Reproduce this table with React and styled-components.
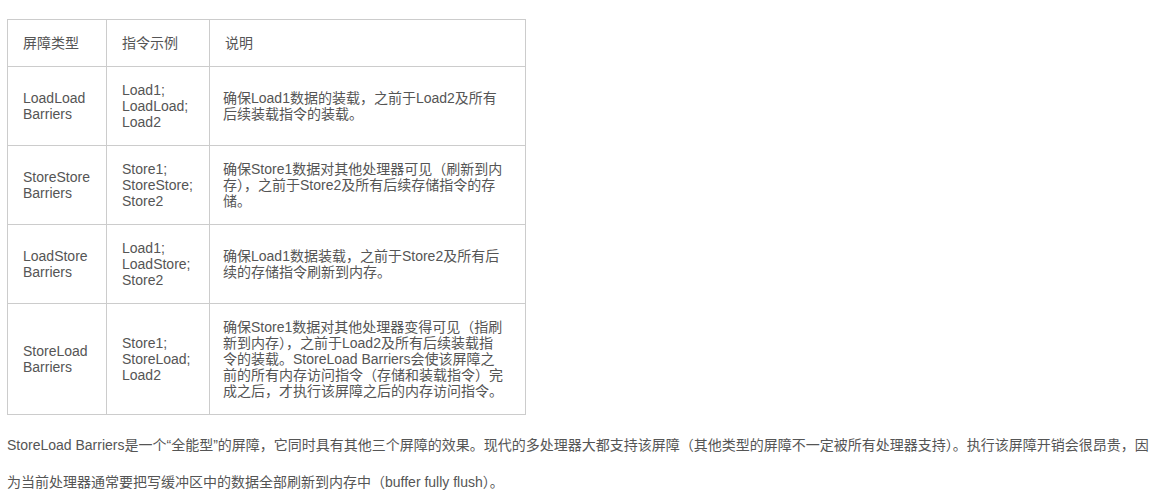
import React from "react";
import styled, { createGlobalStyle } from "styled-components";

const Global = createGlobalStyle`
  html, body { margin: 0; padding: 0; background: #fff; }
  body {
    font-family: "Liberation Sans", "Noto Sans CJK SC", Arial, sans-serif;
    font-size: 14px;
    color: #555;
  }
`;

const Page = styled.div`
  padding: 19px 14px 0 7px;
`;

const Table = styled.table`
  border-collapse: collapse;
  table-layout: fixed;
  width: 518px;
  line-height: 16px;
`;

const Th = styled.th`
  box-sizing: border-box;
  border: 1px solid #ccc;
  padding: 15px 15px;
  font-weight: normal;
  text-align: left;
  vertical-align: middle;
  width: ${(p) => p.$w}px;
`;

const Td = styled.td`
  box-sizing: border-box;
  border: 1px solid #ccc;
  padding: 15px ${(p) => p.$pr ?? 15}px 15px ${(p) => p.$pl ?? 15}px;
  vertical-align: middle;
  text-align: left;
`;

const Para = styled.p`
  margin: 12px 0 0 0;
  line-height: 37px;
`;

const rows = [
  {
    type: ["LoadLoad", "Barriers"],
    ex: ["Load1;", "LoadLoad;", "Load2"],
    desc: "确保Load1数据的装载，之前于Load2及所有后续装载指令的装载。",
  },
  {
    type: ["StoreStore", "Barriers"],
    ex: ["Store1;", "StoreStore;", "Store2"],
    desc: "确保Store1数据对其他处理器可见（刷新到内存），之前于Store2及所有后续存储指令的存储。",
  },
  {
    type: ["LoadStore", "Barriers"],
    ex: ["Load1;", "LoadStore;", "Store2"],
    desc: "确保Load1数据装载，之前于Store2及所有后续的存储指令刷新到内存。",
  },
  {
    type: ["StoreLoad", "Barriers"],
    ex: ["Store1;", "StoreLoad;", "Load2"],
    desc: "确保Store1数据对其他处理器变得可见（指刷新到内存），之前于Load2及所有后续装载指令的装载。StoreLoad Barriers会使该屏障之前的所有内存访问指令（存储和装载指令）完成之后，才执行该屏障之后的内存访问指令。",
  },
];

const Lines = ({ items }) =>
  items.map((t, i) => (
    <React.Fragment key={i}>
      {t}
      {i < items.length - 1 && <br />}
    </React.Fragment>
  ));

export default function App() {
  return (
    <>
      <Global />
      <Page>
        <Table>
          <thead>
            <tr>
              <Th $w={99}>屏障类型</Th>
              <Th $w={103}>指令示例</Th>
              <Th $w={316}>说明</Th>
            </tr>
          </thead>
          <tbody>
            {rows.map((r, i) => (
              <tr key={i}>
                <Td>
                  <Lines items={r.type} />
                </Td>
                <Td>
                  <Lines items={r.ex} />
                </Td>
                <Td $pl={13} $pr={21}>
                  {r.desc}
                </Td>
              </tr>
            ))}
          </tbody>
        </Table>
        <Para>
          StoreLoad Barriers是一个“全能型”的屏障，它同时具有其他三个屏障的效果。现代的多处理器大都支持该屏障（其他类型的屏障不一定被所有处理器支持）。执行该屏障开销会很昂贵，因为当前处理器通常要把写缓冲区中的数据全部刷新到内存中（buffer fully flush）。
        </Para>
      </Page>
    </>
  );
}
